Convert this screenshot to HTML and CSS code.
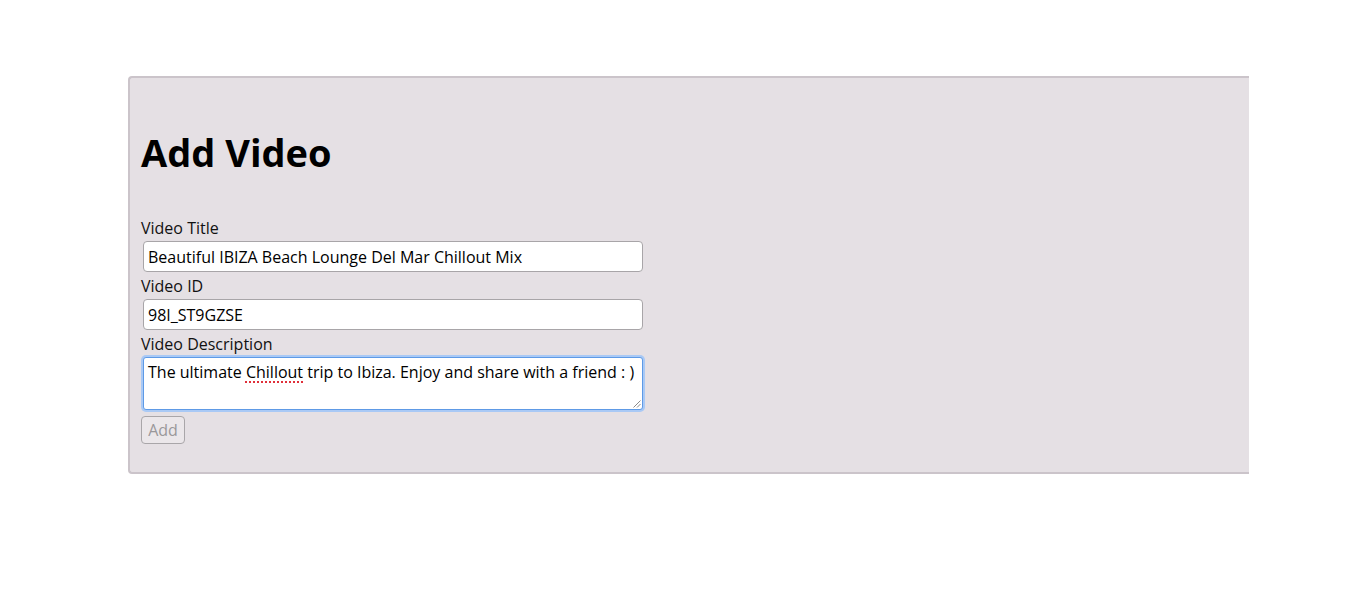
FILE: index.html
```html
<!DOCTYPE html>
<html lang="en">
<head>
<meta charset="utf-8">
<title>Add Video</title>
<link rel="stylesheet" href="styles.css">
</head>
<body>
<div class="panel">
  <h1 class="title">Add Video</h1>
  <form class="form">
    <label class="label" for="t">Video Title</label>
    <input class="field" id="t" type="text" value="Beautiful IBIZA Beach Lounge Del Mar Chillout Mix">
    <label class="label" for="i">Video ID</label>
    <input class="field" id="i" type="text" value="98I_ST9GZSE">
    <label class="label">Video Description</label>
    <div class="area">The ultimate <span class="spell">Chillout</span> trip to Ibiza. Enjoy and share with a friend : )<svg class="grip" width="9" height="9" viewBox="0 0 9 9"><path d="M8.5 1.5 L1.5 8.5 M8.5 5 L5 8.5" stroke="#8a8a8a" stroke-width="1" fill="none"/></svg></div>
    <button class="btn" type="button" disabled>Add</button>
  </form>
</div>
</body>
</html>
```
FILE: styles.css
```css
html, body {
  margin: 0;
  padding: 0;
  background: #ffffff;
}
body {
  padding: 76px 0 0 128px;
  font-family: "Open Sans", "Liberation Sans", sans-serif;
  color: #111;
}
.panel {
  width: 1121px;
  box-sizing: border-box;
  background: #e5e0e4;
  border: 2px solid #cbc4ca;
  border-right: none;
  border-radius: 4px 0 0 4px;
  padding: 0 0 28px 11px;
}
.title {
  margin: 0;
  padding-top: 48px;
  font-size: 38px;
  line-height: 52px;
  font-weight: 700;
  color: #000;
  height: 52px;
}
.form {
  display: flex;
  flex-direction: column;
  align-items: flex-start;
  padding-top: 39px;
}
.label {
  display: block;
  font-size: 16px;
  line-height: 22px;
  height: 22px;
  color: #111;
}
.field {
  display: block;
  box-sizing: border-box;
  width: 500px;
  height: 31px;
  margin: 2px 0 3px 2px;
  padding: 0 4px;
  border: 1px solid #a8a5a8;
  border-radius: 4px;
  background: #fff;
  font-family: "Open Sans", "Liberation Sans", sans-serif;
  font-size: 16px;
  color: #000;
  outline: none;
}
.area {
  position: relative;
  box-sizing: border-box;
  width: 500px;
  height: 53px;
  margin: 2px 0 6px 2px;
  padding: 3px 4px;
  border: 1px solid #5e9ae6;
  border-radius: 3px;
  box-shadow: 0 0 0 2px #a9c9f5;
  background: #fff;
  font-size: 16px;
  line-height: 22px;
  color: #000;
}
.spell {
  text-decoration: underline dotted #e0303a;
  text-decoration-thickness: 2px;
  text-underline-offset: 3px;
}
.grip {
  position: absolute;
  right: 1px;
  bottom: 1px;
}
.btn {
  box-sizing: border-box;
  width: 44px;
  height: 28px;
  margin: 0;
  padding: 0;
  border: 1px solid #a9a6a9;
  border-radius: 4px;
  background: #ebe7ea;
  font-family: "Open Sans", "Liberation Sans", sans-serif;
  font-size: 16px;
  color: #9a989a;
}
```
